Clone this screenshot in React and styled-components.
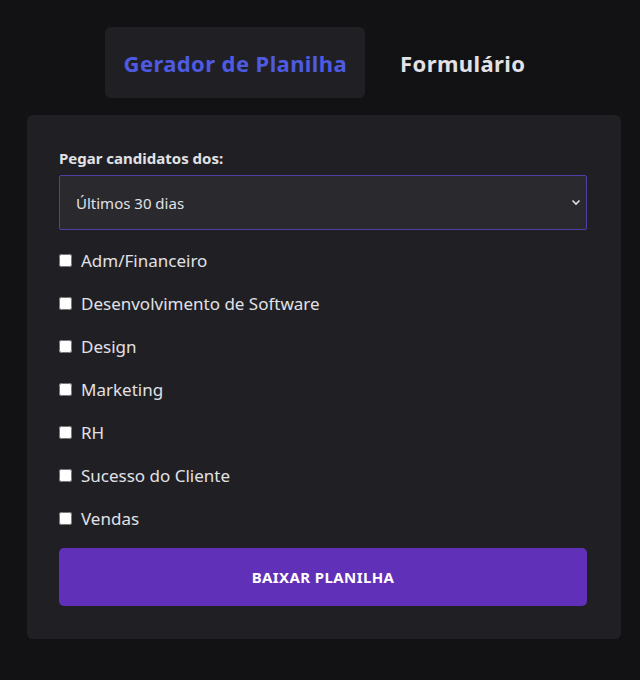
import React, { useState } from 'react';
import styled, { createGlobalStyle } from 'styled-components';

const GlobalStyle = createGlobalStyle`
    body {
        margin: 0;
        background: #121214;
        font-family: 'Noto Sans', 'Open Sans', sans-serif;
        color: #e1e1e6;
    }
`;

const Page = styled.div`
    width: 640px;
    min-height: 680px;
    padding-top: 27px;
    box-sizing: border-box;
    display: flex;
    flex-direction: column;
    align-items: center;
    padding-left: 8px;
`;

const Tabs = styled.div`
    display: flex;
    gap: 16px;
`;

const Tab = styled.button`
    border: none;
    border-radius: 6px;
    height: 71px;
    padding: 0 18px 0 19px;
    font-family: inherit;
    font-size: 22px;
    font-weight: 700;
    letter-spacing: 0.4px;
    cursor: pointer;
    background: ${(p) => (p.active ? '#202024' : 'transparent')};
    color: ${(p) => (p.active ? '#4e5ae0' : '#e1e1e6')};
`;

const Card = styled.div`
    margin-top: 17px;
    width: 594px;
    box-sizing: border-box;
    background: #202024;
    border-radius: 6px;
    padding: 32px 34px 33px 32px;
`;

const FieldLabel = styled.label`
    display: block;
    font-size: 15px;
    font-weight: 700;
    line-height: 22px;
    color: #e1e1e6;
`;

const SelectWrap = styled.div`
    position: relative;
    margin-top: 6px;
`;

const Select = styled.select`
    display: block;
    width: 100%;
    height: 55px;
    background: #29292e;
    color: #e1e1e6;
    border: 1px solid #523fa6;
    border-radius: 2px;
    padding: 0 30px 0 16px;
    font-family: inherit;
    font-size: 15px;
    appearance: none;
    outline: none;
    cursor: pointer;
`;

const Chevron = styled.svg`
    position: absolute;
    right: 6px;
    top: 24px;
    pointer-events: none;
`;

const List = styled.div`
    margin-top: 9px;
    display: flex;
    flex-direction: column;
`;

const Row = styled.label`
    height: 43px;
    display: flex;
    align-items: center;
    gap: 9px;
    font-size: 17px;
    color: #e1e1e6;
    cursor: pointer;

    input {
        margin: 0;
        width: 13px;
        height: 13px;
    }
`;

const Button = styled.button`
    margin-top: 8px;
    width: 100%;
    height: 58px;
    border: none;
    border-radius: 5px;
    background: #6130b8;
    color: #ffffff;
    font-family: inherit;
    font-size: 15px;
    font-weight: 700;
    letter-spacing: 0.4px;
    cursor: pointer;
`;

const areas = [
    'Adm/Financeiro',
    'Desenvolvimento de Software',
    'Design',
    'Marketing',
    'RH',
    'Sucesso do Cliente',
    'Vendas'
];

const App = () => {
    const [tab, setTab] = useState(0);
    return (
        <Page>
            <GlobalStyle />
            <Tabs>
                <Tab active={tab === 0} onClick={() => setTab(0)}>
                    Gerador de Planilha
                </Tab>
                <Tab active={tab === 1} onClick={() => setTab(1)}>
                    Formulário
                </Tab>
            </Tabs>
            <Card>
                <FieldLabel htmlFor="periodo">Pegar candidatos dos:</FieldLabel>
                <SelectWrap>
                    <Select id="periodo" defaultValue="30">
                        <option value="7">Últimos 7 dias</option>
                        <option value="30">Últimos 30 dias</option>
                        <option value="90">Últimos 90 dias</option>
                    </Select>
                    <Chevron width="10" height="7" viewBox="0 0 10 7">
                        <path d="M1.5 1.5 L5 5 L8.5 1.5" fill="none" stroke="#e1e1e6" strokeWidth="1.6" />
                    </Chevron>
                </SelectWrap>
                <List>
                    {areas.map((a) => (
                        <Row key={a}>
                            <input type="checkbox" />
                            {a}
                        </Row>
                    ))}
                </List>
                <Button>BAIXAR PLANILHA</Button>
            </Card>
        </Page>
    );
};

export default App;
